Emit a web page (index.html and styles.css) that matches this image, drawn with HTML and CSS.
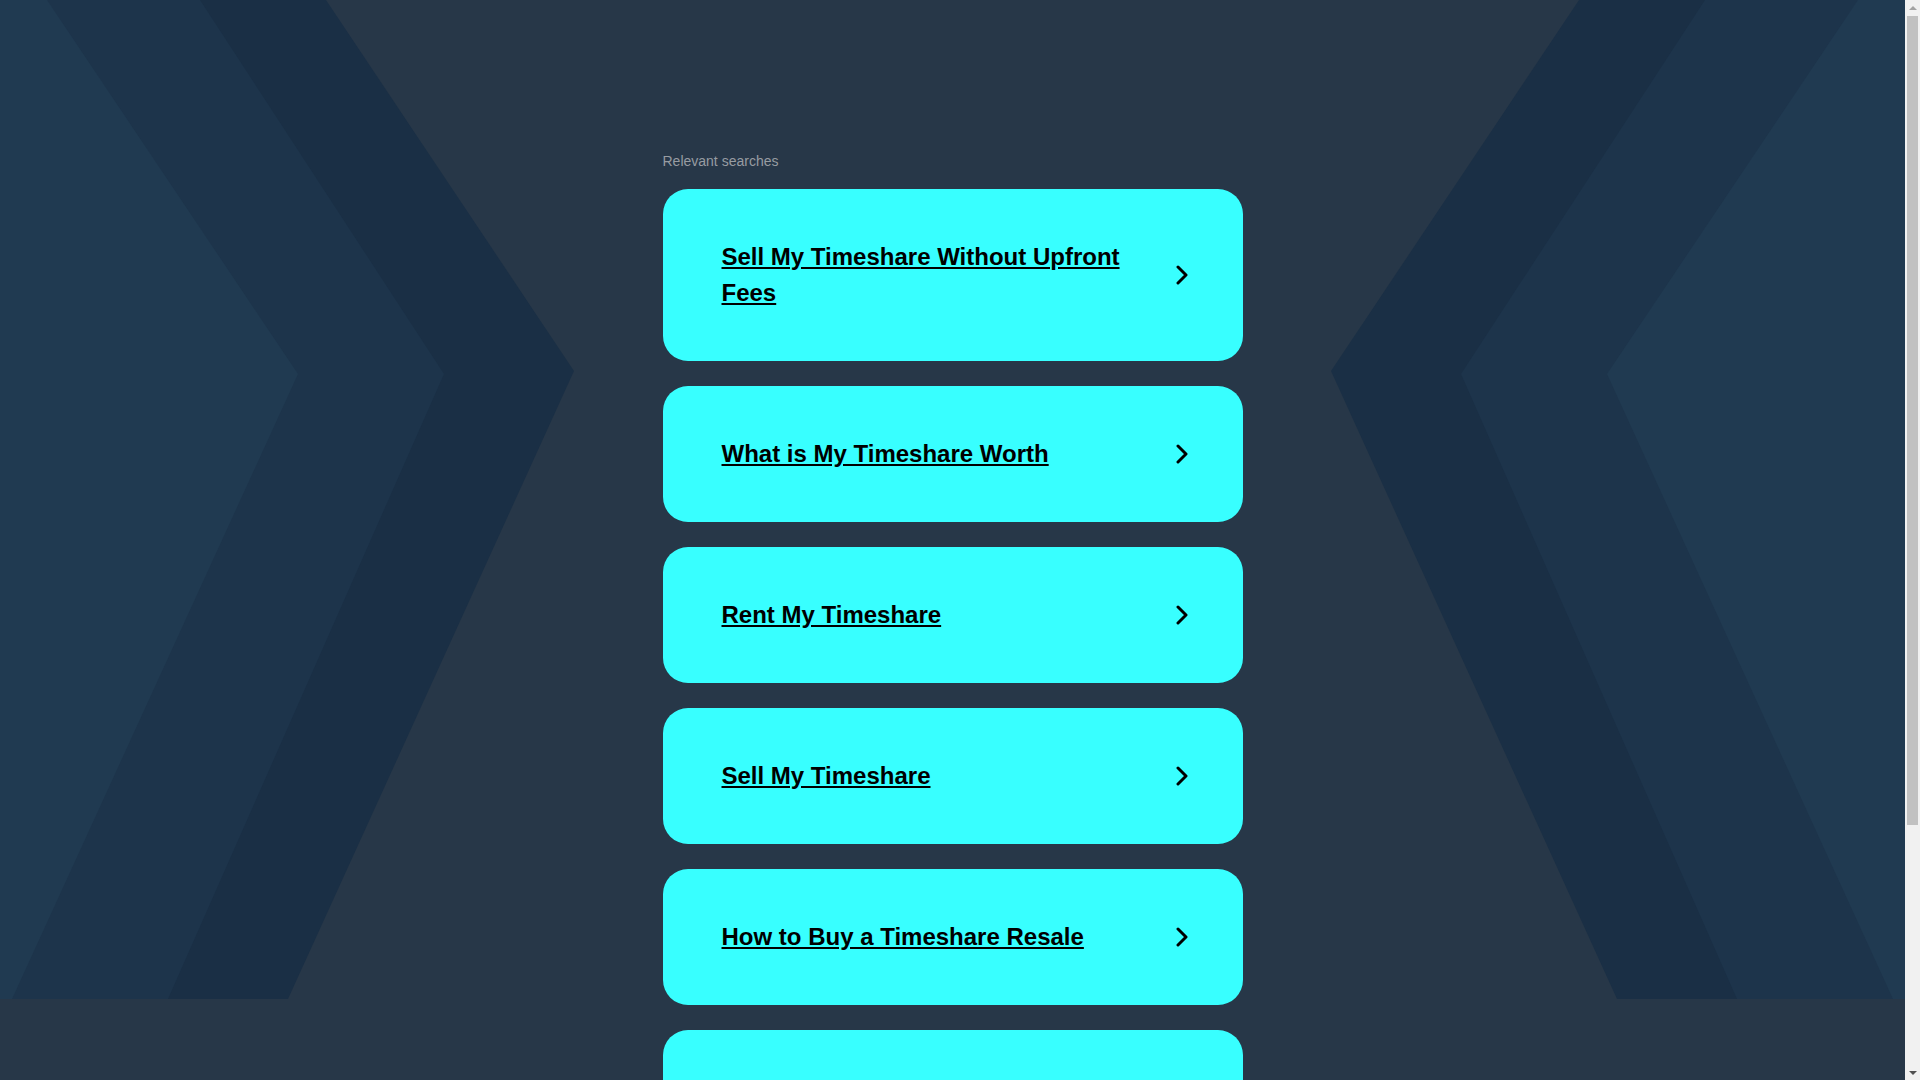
FILE: index.html
```html
<!DOCTYPE html>
<html lang="en">
<head>
<meta charset="utf-8">
<title>Relevant searches</title>
<link rel="stylesheet" href="styles.css">
</head>
<body>
<svg class="bg" viewBox="0 0 1905 999" preserveAspectRatio="none" aria-hidden="true">
  <polygon class="band-outer" points="-10,0 326,0 574,371 288,999 -10,999"/>
  <polygon class="band-middle" points="-10,0 200,0 444,374 168,999 -10,999"/>
  <polygon class="band-inner" points="-10,0 47,0 298,374 12,999 -10,999"/>
  <polygon class="band-outer" points="1915,0 1579,0 1331,371 1617,999 1915,999"/>
  <polygon class="band-middle" points="1915,0 1705,0 1461,374 1737,999 1915,999"/>
  <polygon class="band-inner" points="1915,0 1858,0 1607,374 1893,999 1915,999"/>
</svg>
<main class="container">
  <p class="label">Relevant searches</p>
  <ul class="list">
    <li><a class="card" href="#"><span class="card-text">Sell My Timeshare Without Upfront Fees</span><svg class="chev" viewBox="0 0 12 20"><path d="M2 2 L10 10 L2 18"/></svg></a></li>
    <li><a class="card" href="#"><span class="card-text">What is My Timeshare Worth</span><svg class="chev" viewBox="0 0 12 20"><path d="M2 2 L10 10 L2 18"/></svg></a></li>
    <li><a class="card" href="#"><span class="card-text">Rent My Timeshare</span><svg class="chev" viewBox="0 0 12 20"><path d="M2 2 L10 10 L2 18"/></svg></a></li>
    <li><a class="card" href="#"><span class="card-text">Sell My Timeshare</span><svg class="chev" viewBox="0 0 12 20"><path d="M2 2 L10 10 L2 18"/></svg></a></li>
    <li><a class="card" href="#"><span class="card-text">How to Buy a Timeshare Resale</span><svg class="chev" viewBox="0 0 12 20"><path d="M2 2 L10 10 L2 18"/></svg></a></li>
    <li><a class="card" href="#"><span class="card-text">Timeshare Exit Companies</span><svg class="chev" viewBox="0 0 12 20"><path d="M2 2 L10 10 L2 18"/></svg></a></li>
  </ul>
</main>
<div class="scrollbar" aria-hidden="true">
  <span class="sb-btn sb-up"></span>
  <span class="sb-thumb"></span>
  <span class="sb-btn sb-down"></span>
</div>
</body>
</html>
```

FILE: styles.css
```css
html, body {
  margin: 0;
  padding: 0;
}

body {
  position: relative;
  padding-right: 15px;
  background: #273748;
  font-family: "Liberation Sans", Arial, sans-serif;
}

.bg {
  position: absolute;
  top: 0;
  left: 0;
  width: calc(100% - 15px);
  height: 999px;
  z-index: 0;
}

.band-outer { fill: #1a2f45; }
.band-middle { fill: #1d344b; }
.band-inner { fill: #203a51; }

.container {
  position: relative;
  z-index: 1;
  width: 580px;
  margin: 0 auto;
  padding: 153px 0 234px;
}

.label {
  margin: 0 0 20px;
  font-size: 14px;
  line-height: 16px;
  color: #979ca2;
}

.list {
  list-style: none;
  margin: 0;
  padding: 0;
  display: flex;
  flex-direction: column;
  gap: 25px;
}

.card {
  display: flex;
  align-items: center;
  background: #38ffff;
  border-radius: 25px;
  padding: 50px 55px 50px 59px;
  color: #000;
  text-decoration: none;
}

.card-text {
  flex: 1;
  margin-right: 20px;
  font-size: 24px;
  font-weight: bold;
  line-height: 36px;
  text-decoration: underline;
}

.chev {
  flex: none;
  width: 12px;
  height: 20px;
}

.chev path {
  fill: none;
  stroke: #000;
  stroke-width: 3;
  stroke-linecap: round;
  stroke-linejoin: round;
}

/* classic browser scrollbar drawn over the right edge */
.scrollbar {
  position: fixed;
  top: 0;
  right: 0;
  z-index: 2;
  width: 15px;
  height: 100vh;
  display: flex;
  flex-direction: column;
  align-items: center;
  background: #f1f1f1;
}

.sb-btn {
  flex: none;
  width: 15px;
  height: 15px;
  display: flex;
  align-items: center;
  justify-content: center;
}

.sb-btn::before {
  content: "";
  width: 0;
  height: 0;
  border-left: 4px solid transparent;
  border-right: 4px solid transparent;
}

.sb-up::before {
  border-bottom: 4px solid #a3a3a3;
}

.sb-down::before {
  border-top: 4px solid #505050;
}

.sb-thumb {
  flex: none;
  width: 11px;
  height: 809px;
  margin-top: 1px;
  background: #c1c1c1;
}

.sb-down {
  margin-top: auto;
}
```
